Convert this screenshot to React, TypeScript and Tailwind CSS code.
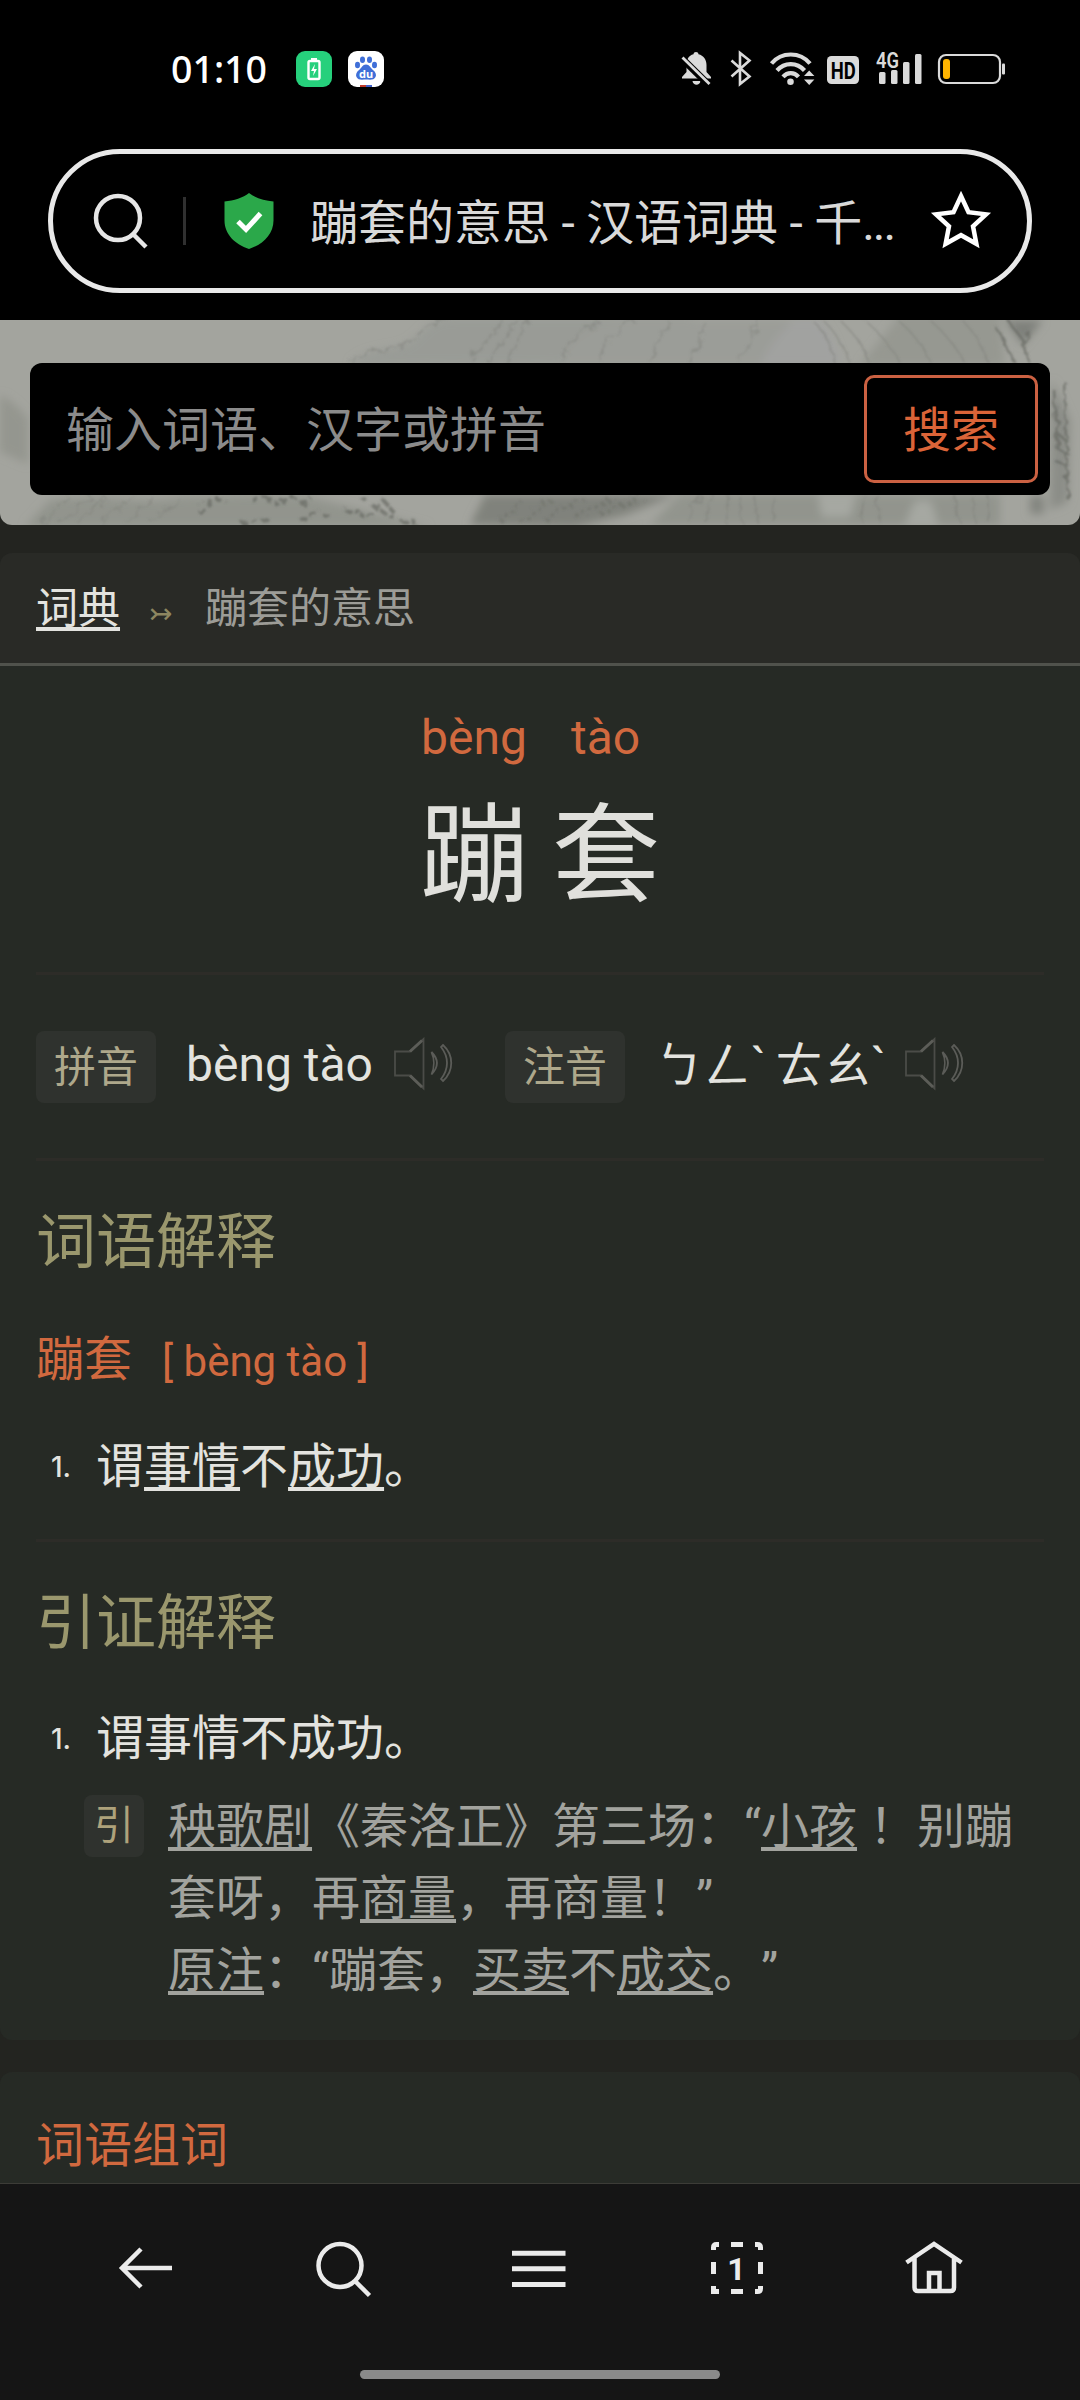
import React from 'react'

function U({ children }: { children: React.ReactNode }) {
  return <a className="underline decoration-[4px] underline-offset-[4px] [text-decoration-skip-ink:none]">{children}</a>
}

function StatusBar() {
  return (
    <div className="flex h-[137px] shrink-0 items-start bg-black pt-[51px]">
      <div className="ml-[171px] w-[125px] font-['Noto_Sans'] text-[37.5px] font-medium leading-[36px] text-white">01:10</div>
      <svg className="h-9 w-9" viewBox="0 0 36 36">
        <rect width="36" height="36" rx="9" fill="#26d07c" />
        <rect x="12.5" y="10" width="11" height="18" rx="1.5" fill="none" stroke="#fff" strokeWidth="2.4" />
        <rect x="15" y="7" width="6" height="3" fill="#fff" />
        <path d="M19 13l-4 7h3l-1 5 4-7h-3z" fill="#fff" />
      </svg>
      <svg className="ml-4 h-9 w-9" viewBox="0 0 36 36">
        <rect width="36" height="36" rx="9" fill="#fff" />
        <g fill="#3f6fd8">
          <ellipse cx="9.5" cy="14" rx="2.5" ry="3.2" />
          <ellipse cx="14.5" cy="8.8" rx="2.5" ry="3.3" />
          <ellipse cx="21.5" cy="8.8" rx="2.5" ry="3.3" />
          <ellipse cx="26.5" cy="14" rx="2.5" ry="3.2" />
          <path d="M18 13.500c3.500 0 4.500 3.500 7 5.500 3 2.500 3.500 5 2.500 7-1.500 3.500-6 2.500-9.500 2.500s-8 1-9.500-2.500c-1-2-.5-4.500 2.500-7 2.500-2 3.500-5.500 7-5.500z" />
        </g>
        <text x="18" y="26.5" textAnchor="middle" fontSize="11" fontWeight="700" fontFamily="Noto Sans" fill="#fff">du</text>
        <rect x="12" y="34" width="6" height="2" fill="#c0392b" />
        <rect x="18" y="34" width="6" height="2" fill="#3f5fc8" />
      </svg>
      <svg className="-mt-[10px] ml-[297px] h-14 w-[330px] text-[#dadada]" viewBox="681 41 330 56" fill="currentColor">
        <path d="M696 52c1.500 0 2.300.8 2.500 2.300 5 1.300 8 5.200 8 10.700v7l4.500 5v1.500h-29v-1.500l4.500-5v-7c0-5.500 2-9.400 7-10.700.2-1.500 1-2.300 2.500-2.300z" />
        <path d="M692.500 81h8c-.6 5-7.400 5-8 0z" />
        <path d="M681 57.500l28.500 28" stroke="#000" strokeWidth="7" />
        <path d="M682.500 57.500l27 26.500" stroke="currentColor" strokeWidth="2.800" />
        <path d="M731.500 60.500l18 16-9.500 7.500V53l9.500 7.500-18 16" fill="none" stroke="currentColor" strokeWidth="2.600" />
        <g fill="none" stroke="currentColor" strokeWidth="4.200">
          <path d="M771.500 63.500c10-12 28.500-12 38.500 0" />
          <path d="M777 70.500c7.500-8.500 20-8.500 27.500 0" />
          <path d="M783 76.800c4.500-5 11-5 15.500 0" />
        </g>
        <circle cx="790.5" cy="81.7" r="3.3" />
        <path d="M804 76l5.200-5.500 5.200 5.500zM804 79.500h10.400l-5.200 5.500z" />
        <rect x="827" y="56" width="32" height="28" rx="4.5" />
        <text x="843.3" y="78.800" textAnchor="middle" fontSize="24" fontWeight="700" fontFamily="Roboto" fill="#000" textLength="25" lengthAdjust="spacingAndGlyphs">HD</text>
        <text x="876" y="67.500" fontSize="21.500" fontWeight="600" fontFamily="Roboto" textLength="23" lengthAdjust="spacingAndGlyphs">4G</text>
        <rect x="879" y="72" width="6.5" height="12" rx="1.5" />
        <rect x="891" y="70" width="6.5" height="14" rx="1.5" />
        <rect x="903" y="62" width="6.5" height="22" rx="1.5" />
        <rect x="915" y="54" width="6.5" height="30" rx="1.5" />
        <rect x="939" y="55" width="61" height="28" rx="7" fill="none" stroke="currentColor" strokeWidth="2.2" />
        <rect x="1002" y="63.5" width="3" height="11" rx="1" />
        <rect x="943" y="59" width="7" height="20" rx="3" fill="#ffb400" />
      </svg>
    </div>
  )
}

function AddressBar() {
  return (
    <div className="h-[183px] shrink-0 bg-black px-12 pt-3">
      <div className="flex h-36 items-center rounded-full border-[5px] border-[#e9e9e9] pl-[39px] pr-[35px]">
        <svg className="h-[60px] w-[60px] shrink-0" viewBox="0 0 60 60" fill="none" stroke="#e6e6e6" strokeWidth="4.5">
          <circle cx="26" cy="27" r="22" />
          <path d="M41 43l13 13" />
        </svg>
        <div className="ml-[31px] h-12 w-[3px] shrink-0 bg-[#303030]" />
        <svg className="ml-[38px] h-14 w-[50px] shrink-0" viewBox="0 0 50 56">
          <path d="M25 0c6 5 15 7.500 24.500 8.500v19C49.500 41 39 51.500 25 56 11 51.500.5 41 .5 27.500v-19C10 7.500 19 5 25 0z" fill="#2ba84a" />
          <path d="M14 28.500l8 8 14.500-16" fill="none" stroke="#fff" strokeWidth="5" />
        </svg>
        <div className="ml-9 flex-1 whitespace-nowrap pt-[5px] text-[48px] leading-[60px] text-[#d9d9d9] [word-spacing:-0.5px]">
          蹦套的意思 - 汉语词典 - 千<span className="tracking-[-2px]">...</span>
        </div>
        <svg className="h-[62px] w-[62px] shrink-0" viewBox="0 0 62 62" fill="none" stroke="#fff" strokeWidth="4.5">
          <path d="M31 6l7.500 16.200 17.500 2.100-13 12 3.400 17.500L31 45.200l-15.400 8.600L19 36.300l-13-12 17.500-2.100z" />
        </svg>
      </div>
    </div>
  )
}

/** Ink-wash mountains behind the search box. */
function Mountains() {
  return (
    <svg className="absolute inset-0 h-[205px] w-[1080px]" viewBox="0 0 1080 205" fill="none">
      <defs>
        <filter id="soft" x="-10%" y="-10%" width="120%" height="120%">
          <feGaussianBlur stdDeviation="4" />
        </filter>
        <filter id="rough" x="-5%" y="-5%" width="110%" height="110%">
          <feTurbulence type="fractalNoise" baseFrequency="0.09" numOctaves="3" seed="4" result="n" />
          <feDisplacementMap in="SourceGraphic" in2="n" scale="12" />
          <feGaussianBlur stdDeviation="0.9" />
        </filter>
      </defs>
      <g filter="url(#soft)">
        <path d="M350 45c15-18 40-14 58-22 15-10 20-25 45-25h240l30 45z" fill="#999b96" />
        <path d="M560 45c10-25 40-45 75-45h170c15 12 22 28 26 45z" fill="#9b9d98" />
        <path d="M760 45c10-20 22-35 35-45h25c13 15 18 30 22 45z" fill="#a1a2a0" />
        <path d="M900-5h100l5 50H860z" fill="#969891" />
        <path d="M1005 0h38l-20 25z" fill="#7e807a" />
        <path d="M0 75c12 5 20 14 28 24v45l-28-12z" fill="#94968f" />
        <path d="M50 180c60-8 90 6 130-3l70-2 60 2 120 30H25z" fill="#92948d" />
        <path d="M470 205l15-30h190l-50 20-50 12z" fill="#80827c" />
        <path d="M680 175h320v30H650z" fill="#92948d" />
        <path d="M818 175h38l-6 22h-28zM905 205l10-24h16l7 24z" fill="#a6a8a2" />
        <path d="M1052 60l18 40-2 82-18 8z" fill="#8b8d87" />
        <path d="M1030 176h14v18h-14z" fill="#83857f" />
      </g>
      <g filter="url(#rough)" stroke="#7c7e77" strokeOpacity="0.5" strokeWidth="1.6">
        <path d="M350 45c15-18 40-14 58-22 15-10 20-25 45-25M468 43l35-43M486 43l32-43M505 43l24-43M560 40c8-18 22-30 40-38M600 40c5-18 18-32 34-40M650 43l20-43M690 43l16-40M740 43l20-43" />
        <path d="M812 0c14 12 20 28 24 45M825 2c12 12 20 26 25 42M840 0c14 14 26 28 30 44M865 0c12 10 25 26 34 42M900 2c14 12 24 24 30 40M930 0c14 12 26 26 34 42M962 0c14 14 22 28 26 42" />
        <path d="M40 203l30-25M58 203l34-26M78 203l28-26M100 203l34-28M125 203l28-26M150 203l30-24M690 203c0-12 6-20 12-28M706 203c0-12 4-20 8-28M725 203l5-28M742 203l-3-28M758 203l-4-28M775 203l-4-28M862 203c-4-12-2-20 2-28M880 203l-3-28M960 203c-5-10-6-18-5-28M975 203l-3-28M988 203v-28" />
      </g>
      <g filter="url(#rough)" stroke="#64665f" strokeOpacity="0.65" strokeWidth="4">
        <path d="M200 194l14-16 12 4M252 180l16-3 10 8 12-8 12 6 8-6M345 190l22 6 18-14 10 12M362 178l30 20 28 6M240 203l30-3M300 200l26-8" strokeDasharray="7 4" />
        <path d="M500 202l22-20M520 202l30-24M545 200l38-22M575 196l40-18M600 194l42-18" strokeOpacity="0.35" strokeDasharray="4 3" />
        <path d="M996 8l20 36M1008 0l16 22 4 20M1030 12l-6 10M1054 70l4 60M1056 112l14 12M1054 126l16 10M1054 140l16 8M1064 60l4 120" strokeWidth="2.500" />
      </g>
    </svg>
  )
}

function Banner() {
  return (
    <div className="relative h-[205px] shrink-0 overflow-hidden rounded-b-xl bg-[#a3a49e] px-[30px] pt-[43px]">
      <Mountains />
      <div className="relative flex h-[132px] items-center justify-between rounded-xl bg-black pl-9 pr-3">
        <span className="pt-[3px] text-[48px] text-[#8b8b8b]">输入词语、汉字或拼音</span>
        <button className="h-[108px] w-[174px] rounded-[10px] border-[3px] border-[#cb6142] pt-[3px] text-[48px] text-[#db6438]">搜索</button>
      </div>
    </div>
  )
}

function Speaker() {
  return (
    <svg className="mb-[6px] h-[54px] w-[60px] shrink-0" viewBox="0 0 60 54" fill="none" stroke="#4b4c48" strokeWidth="1.8">
      <path d="M2 14.500h15L30.500 2v49.500L17 38.500H2z" />
      <path d="M17 14.500L29 3.500M17 38.500l12 11.500" stroke="#5c5d58" strokeWidth="3" />
      <path d="M38.500 15c7 7 7 15 0 22.500 3-7 3-16 0-22.500z" stroke="#5b5c58" />
      <path d="M50 8c11 10 11 26 0 36l-2-2c8-10 8-22 0-32z" stroke="#5b5c58" />
    </svg>
  )
}

function Badge({ children }: { children: React.ReactNode }) {
  return <span className="flex h-[72px] w-[120px] shrink-0 items-center justify-center rounded-lg bg-[#2f322e] pt-px text-[42px] text-[#aea88b]">{children}</span>
}

function Tone() {
  return <span className="inline-block w-[17px] font-['Noto_Sans']">ˋ</span>
}

function NavBar() {
  const icon = 'h-[60px] w-[60px]'
  return (
    <nav className="flex h-[217px] shrink-0 flex-col border-t border-[#3c3c37] bg-[#151515] pt-[54px]">
      <div className="flex justify-between px-[116px]">
        <svg className={icon} viewBox="116 2238 60 60" fill="none" stroke="#ebebeb" strokeWidth="4.5">
          <path d="M172 2268H122M141 2249l-19 19 19 19" />
        </svg>
        <svg className={icon} viewBox="313 2238 60 60" fill="none" stroke="#ebebeb" strokeWidth="4.5">
          <circle cx="340" cy="2265.500" r="21.5" />
          <path d="M355 2281l14.500 14.500" />
        </svg>
        <svg className={icon} viewBox="510 2238 60 60" fill="none" stroke="#ebebeb" strokeWidth="5">
          <path d="M512 2253.300h53.500M512 2268.800h53.500M512 2284.500h53.500" />
        </svg>
        <svg className={icon} viewBox="707 2238 60 60" fill="none" stroke="#ebebeb" strokeWidth="5">
          <path d="M713.500 2250v-2.500q0-3 3-3h2.500M731 2244.500h12M755 2244.500h2.500q3 0 3 3v2.500M760.500 2262v12M760.500 2286v2.500q0 3-3 3H755M743 2291.500h-12M719 2291.500h-5.500V2286M713.500 2274v-12" />
          <text x="736.5" y="2280" textAnchor="middle" fontSize="32" fontWeight="700" fontFamily="Roboto" fill="#ebebeb" stroke="none">1</text>
        </svg>
        <svg className={icon} viewBox="904 2238 60 60" fill="none" stroke="#ebebeb" strokeWidth="4.5">
          <path d="M906.500 2262.500l27.500-18.500 27.500 18.500M914.500 2258v29.500q0 3.500 3.500 3.500h32.500q3.500 0 3.500-3.500V2258M929 2291v-18h10.500v18" />
        </svg>
      </div>
      <div className="mx-auto mt-[72px] h-[9px] w-[360px] rounded-full bg-[#8a8a8a]" />
    </nav>
  )
}

export default function App() {
  return (
    <div
      lang="zh-CN"
      className="flex h-[2400px] w-[1080px] flex-col overflow-hidden bg-[#232420] font-['Roboto','Noto_Sans_CJK_SC',sans-serif] text-[#e3e3df] [text-spacing-trim:space-all]"
    >
      <StatusBar />
      <AddressBar />
      <Banner />
      <div className="mt-[28px] flex h-[113px] shrink-0 items-center rounded-t-xl border-b-[3px] border-[#50524c] bg-[#292a26] px-9 text-[42px]">
        <U>词典</U>
        <span className="ml-[29px] mt-3 w-[24px] text-[28px] text-[#8d8660]">↣</span>
        <span className="ml-[32px] text-[#9c9c97]">蹦套的意思</span>
      </div>
      <div className="h-[1374px] shrink-0 rounded-b-xl bg-[#262a25] px-9">
        <div className="flex h-[309px] flex-col border-b-[3px] border-[#2d2c28] pt-[44px]">
          <div className="flex pl-[385px] text-[48px] leading-[56px] text-[#d1693f]">
            <span className="w-[150px]">bèng</span>
            <span>tào</span>
          </div>
          <div className="mt-[10px] text-center text-[108px] leading-[160px] text-[#e0e0dc] [word-spacing:-3px]">蹦 套</div>
        </div>
        <div className="flex h-[186px] items-center border-b-[3px] border-[#2d2c28]">
          <Badge>拼音</Badge>
          <span className="mb-[3px] ml-[30px] w-[207px] text-[48px]">bèng tào</span>
          <Speaker />
          <span className="w-[52px]" />
          <Badge>注音</Badge>
          <span className="mb-1 ml-[30px] w-[249px] whitespace-nowrap text-[48px] [word-spacing:-5px]">ㄅㄥ<Tone /> ㄊㄠ<Tone /></span>
          <Speaker />
        </div>
        <h2 className="mt-[37px] text-[60px] leading-[90px] text-[#9a976d]">词语解释</h2>
        <div className="mt-[36px] flex h-[72px] items-baseline text-[48px] leading-[72px] text-[#d1693f]">
          蹦套<span className="ml-[30px] text-[42px]">[ bèng tào ]</span>
        </div>
        <div className="mt-[35px] flex h-[72px] items-center text-[48px] leading-[72px]">
          <span className="w-[60px] pl-[15px] font-['Inter'] text-[28px] font-medium">1.</span>
          <span>谓<U>事情</U>不<U>成功</U>。</span>
        </div>
        <div className="mt-[36px] h-[3px] bg-[#2d2c28]" />
        <h2 className="mt-[37px] text-[60px] leading-[90px] text-[#9a976d]">引证解释</h2>
        <div className="mt-[34px] flex h-[72px] items-center text-[48px] leading-[72px]">
          <span className="w-[60px] pl-[15px] font-['Inter'] text-[28px] font-medium">1.</span>
          <span>谓事情不成功。</span>
        </div>
        <div className="mt-[15px] flex pl-12 text-[48px] leading-[72px] text-[#a2a39e]">
          <span className="mt-[5px] flex h-[62px] w-[60px] items-center justify-center rounded-lg bg-[#2f322e] text-[40px] text-[#aea27b]">引</span>
          <div className="ml-6 whitespace-nowrap pt-px">
            <p><U>秧歌剧</U>《秦洛正》第三场：“<U>小孩</U> ！别蹦</p>
            <p>套呀，再<U>商量</U>，再商量！”</p>
            <p><U>原注</U>：“蹦套，<U>买卖</U>不<U>成交</U>。”</p>
          </div>
        </div>
      </div>
      <div className="mt-[32px] h-[111px] shrink-0 rounded-t-xl bg-[#262a25] px-9 pt-[38px] text-[48px] leading-[72px] text-[#d1693f]">词语组词</div>
      <NavBar />
    </div>
  )
}
